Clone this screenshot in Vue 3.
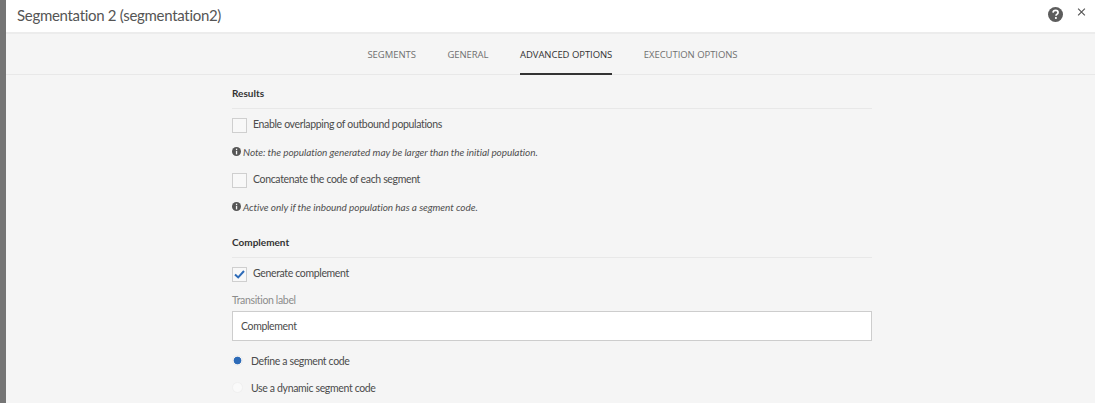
<template>
  <div class="page">
    <div class="backdrop"></div>
    <div class="dialog">
      <header class="dialog-header">
        <h1 class="dialog-title">Segmentation 2 (segmentation2)</h1>
        <div class="header-actions">
          <svg class="help" width="15" height="15" viewBox="0 0 14 14">
            <circle cx="7" cy="7" r="7" fill="#5c5c5c" />
            <path d="M4.7 5.3C4.8 4 5.8 3.2 7.1 3.2c1.3 0 2.3.8 2.3 1.9 0 1-.6 1.4-1.2 1.8-.5.3-.7.6-.7 1.2" fill="none" stroke="#fff" stroke-width="1.6" />
            <rect x="6.5" y="9.4" width="1.7" height="1.7" fill="#fff" />
          </svg>
          <svg class="close" width="9" height="8" viewBox="0 0 9 9">
            <path d="M.7.7l7.6 7.6M8.3.7L.7 8.3" stroke="#555" stroke-width="1.3" fill="none" />
          </svg>
        </div>
      </header>

      <nav class="tabs">
        <a v-for="tab in tabs" :key="tab" :class="['tab', { active: tab === activeTab }]">{{ tab }}</a>
      </nav>

      <div class="content">
        <h2 class="section-title">Results</h2>
        <label class="check-row">
          <span class="checkbox"></span>
          <span class="check-text">Enable overlapping of outbound populations</span>
        </label>
        <p class="note">
          <svg width="9" height="9" viewBox="0 0 9 9">
            <circle cx="4.5" cy="4.5" r="4.5" fill="#555" />
            <rect x="3.9" y="3.8" width="1.3" height="3.6" fill="#f5f5f5" />
            <rect x="3.9" y="1.7" width="1.3" height="1.3" fill="#f5f5f5" />
          </svg>
          <em>Note: the population generated may be larger than the initial population.</em>
        </p>
        <label class="check-row">
          <span class="checkbox"></span>
          <span class="check-text">Concatenate the code of each segment</span>
        </label>
        <p class="note">
          <svg width="9" height="9" viewBox="0 0 9 9">
            <circle cx="4.5" cy="4.5" r="4.5" fill="#555" />
            <rect x="3.9" y="3.8" width="1.3" height="3.6" fill="#f5f5f5" />
            <rect x="3.9" y="1.7" width="1.3" height="1.3" fill="#f5f5f5" />
          </svg>
          <em>Active only if the inbound population has a segment code.</em>
        </p>

        <h2 class="section-title second">Complement</h2>
        <label class="check-row">
          <span class="checkbox">
            <svg width="11" height="9" viewBox="0 0 11 9">
              <path d="M1 4.4l3.2 3L10 1" fill="none" stroke="#2d6bb8" stroke-width="2" />
            </svg>
          </span>
          <span class="check-text">Generate complement</span>
        </label>
        <div class="field-label">Transition label</div>
        <div class="text-input">Complement</div>
        <label class="radio-row">
          <span class="radio on"></span>
          Define a segment code
        </label>
        <label class="radio-row">
          <span class="radio"></span>
          Use a dynamic segment code
        </label>
      </div>
    </div>
  </div>
</template>

<script setup>
const tabs = ['SEGMENTS', 'GENERAL', 'ADVANCED OPTIONS', 'EXECUTION OPTIONS']
const activeTab = 'ADVANCED OPTIONS'
</script>

<style>
html, body {
  margin: 0;
  height: 100%;
  overflow: hidden;
}
</style>

<style scoped>
.page {
  display: flex;
  width: 1095px;
  height: 403px;
  overflow: hidden;
  font-family: Lato, "Open Sans", sans-serif;
  color: #4b4b4b;
  font-size: 10.5px;
  letter-spacing: -0.35px;
}

.backdrop {
  width: 6px;
  flex: none;
  background: #757575;
}

.dialog {
  flex: 1;
  background: #f5f5f5;
}

.dialog-header {
  display: flex;
  justify-content: space-between;
  align-items: center;
  height: 32px;
  padding: 0 9px 0 11px;
  background: #fff;
  border-bottom: 2px solid #ececec;
}

.dialog-title {
  margin: 0 0 3px;
  font-size: 15px;
  font-weight: 400;
  color: #555;
  letter-spacing: -0.3px;
}

.header-actions {
  display: flex;
  align-items: center;
  gap: 14px;
  margin-bottom: 3px;
}

.close {
  margin-bottom: 5px;
}

.tabs {
  display: flex;
  justify-content: center;
  gap: 31.5px;
  height: 40px;
  padding-left: 4px;
  border-bottom: 1px solid #e8e8e8;
  font-family: "Open Sans", sans-serif;
}

.tab {
  display: flex;
  align-items: center;
  font-size: 9.5px;
  color: #707070;
  letter-spacing: -0.05px;
  margin-bottom: -1px;
  border-bottom: 2px solid transparent;
  padding-top: 2px;
  box-sizing: border-box;
}

.tab.active {
  color: #333;
  border-bottom-color: #333;
}

.content {
  width: 640px;
  margin-left: 226px;
}

.section-title {
  margin: 0;
  padding: 12px 0 8px;
  font-size: 10px;
  line-height: 13px;
  font-weight: 700;
  color: #333;
  letter-spacing: 0;
  border-bottom: 1px solid #e8e8e8;
}

.section-title.second {
  padding-top: 8px;
}

.check-row {
  display: flex;
  align-items: center;
  gap: 6px;
  height: 15px;
  margin-top: 9px;
}

.check-text {
  margin-bottom: 3px;
}

.checkbox {
  display: flex;
  align-items: center;
  justify-content: center;
  width: 15px;
  height: 15px;
  box-sizing: border-box;
  border: 1px solid #cfcfcf;
  background: #f8f8f8;
}

.note {
  display: flex;
  align-items: center;
  gap: 2px;
  margin: 12px 0 15px;
  height: 13px;
  font-size: 10px;
  letter-spacing: -0.07px;
  color: #505050;
}

.field-label {
  margin-top: 12px;
  height: 13px;
  line-height: 13px;
  color: #8c8c8c;
}

.text-input {
  display: flex;
  align-items: center;
  height: 30px;
  margin-top: 4px;
  padding: 0 8px;
  box-sizing: border-box;
  border: 1px solid #cdcdcd;
  background: #fff;
}

.radio-row {
  display: flex;
  align-items: center;
  gap: 8px;
  height: 13px;
  margin-top: 13px;
}

.radio-row + .radio-row {
  margin-top: 14px;
}

.radio {
  width: 11px;
  height: 11px;
  box-sizing: border-box;
  border-radius: 50%;
  background: #fafafa;
  border: 1px solid #f0f0f0;
}

.radio.on {
  background: radial-gradient(circle, #2d6bb8 0 3.5px, #f5f5f5 4.2px);
  border-color: #eee;
}
</style>
